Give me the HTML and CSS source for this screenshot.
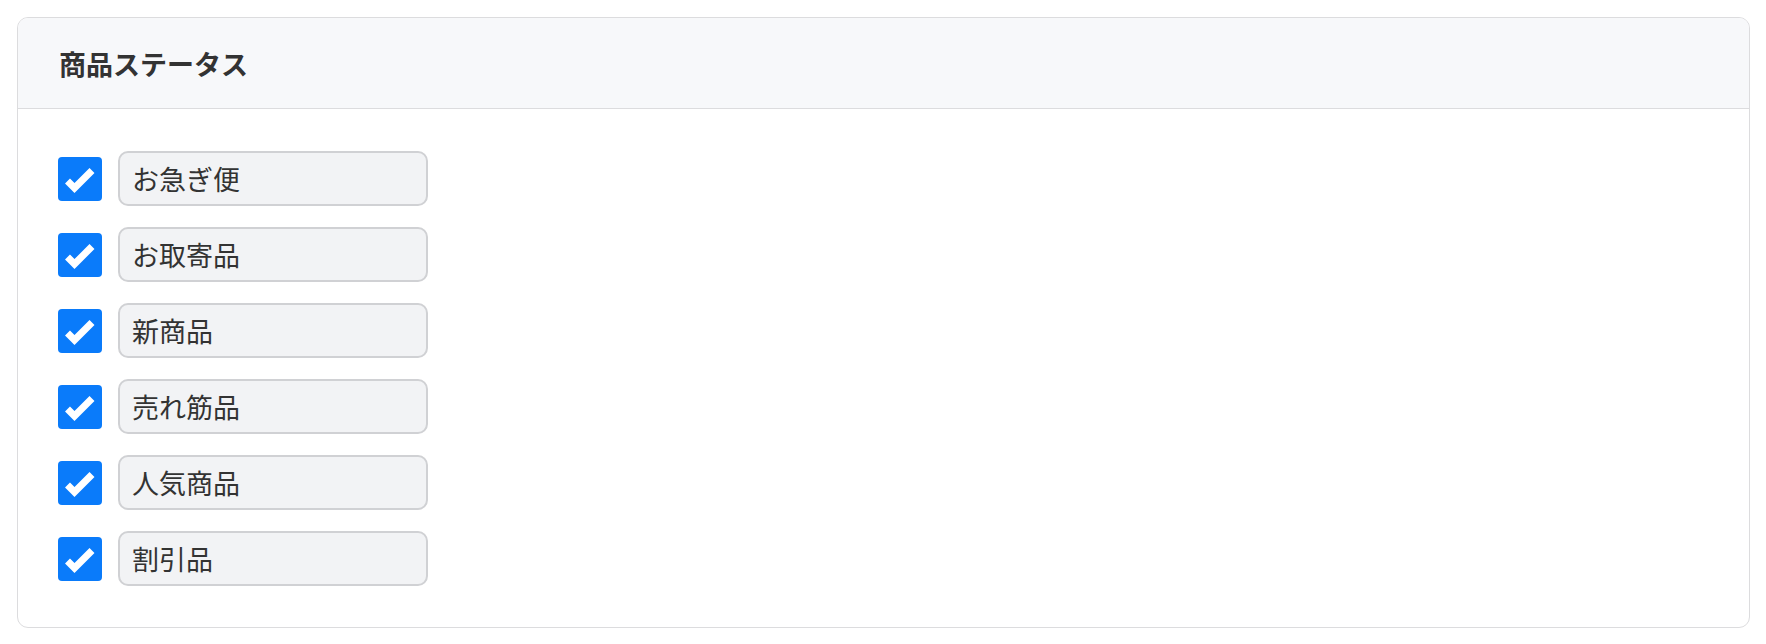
FILE: index.html
```html
<!DOCTYPE html>
<html lang="ja">
<head>
<meta charset="utf-8">
<title>商品ステータス</title>
<link rel="stylesheet" href="styles.css">
</head>
<body>
<section class="card">
  <header class="card-header"><h2 class="card-title">商品ステータス</h2></header>
  <div class="card-body">
    <div class="row"><span class="check"><svg viewBox="0 0 44 44" width="44" height="44"><polyline points="9.5,24 16.5,31 34,13.5" /></svg></span><span class="label">お急ぎ便</span></div>
    <div class="row"><span class="check"><svg viewBox="0 0 44 44" width="44" height="44"><polyline points="9.5,24 16.5,31 34,13.5" /></svg></span><span class="label">お取寄品</span></div>
    <div class="row"><span class="check"><svg viewBox="0 0 44 44" width="44" height="44"><polyline points="9.5,24 16.5,31 34,13.5" /></svg></span><span class="label">新商品</span></div>
    <div class="row"><span class="check"><svg viewBox="0 0 44 44" width="44" height="44"><polyline points="9.5,24 16.5,31 34,13.5" /></svg></span><span class="label">売れ筋品</span></div>
    <div class="row"><span class="check"><svg viewBox="0 0 44 44" width="44" height="44"><polyline points="9.5,24 16.5,31 34,13.5" /></svg></span><span class="label">人気商品</span></div>
    <div class="row"><span class="check"><svg viewBox="0 0 44 44" width="44" height="44"><polyline points="9.5,24 16.5,31 34,13.5" /></svg></span><span class="label">割引品</span></div>
  </div>
</section>
</body>
</html>
```

FILE: styles.css
```css
html, body {
  margin: 0;
  padding: 0;
  background: #ffffff;
}
body {
  padding: 17px 16px 0 17px;
  font-family: "Noto Sans CJK JP", "Noto Sans", sans-serif;
  color: #333333;
}
.card {
  border: 1px solid #dcdcde;
  border-radius: 11px;
  overflow: hidden;
  background: #ffffff;
}
.card-header {
  height: 90px;
  background: #f7f8fa;
  border-bottom: 1px solid #dcdcde;
  display: flex;
  align-items: center;
  padding-left: 41px;
}
.card-title {
  margin: 0;
  font-size: 27px;
  font-weight: 700;
  color: #333333;
  line-height: 1;
}
.card-body {
  padding: 42px 40px 41px 40px;
  display: flex;
  flex-direction: column;
  gap: 21px;
}
.row {
  display: flex;
  align-items: center;
  gap: 16px;
}
.check {
  width: 44px;
  height: 44px;
  border-radius: 4px;
  background: #0a7bfa;
  display: block;
  flex: none;
}
.check svg {
  display: block;
}
.check polyline {
  fill: none;
  stroke: #ffffff;
  stroke-width: 7;
  stroke-linejoin: miter;
  stroke-linecap: butt;
}
.label {
  box-sizing: border-box;
  width: 310px;
  height: 55px;
  border: 2px solid #d0d1d4;
  border-radius: 10px;
  background: #f2f3f5;
  padding-left: 12px;
  display: flex;
  align-items: center;
  font-size: 27px;
  color: #333333;
  line-height: 1;
}
```
